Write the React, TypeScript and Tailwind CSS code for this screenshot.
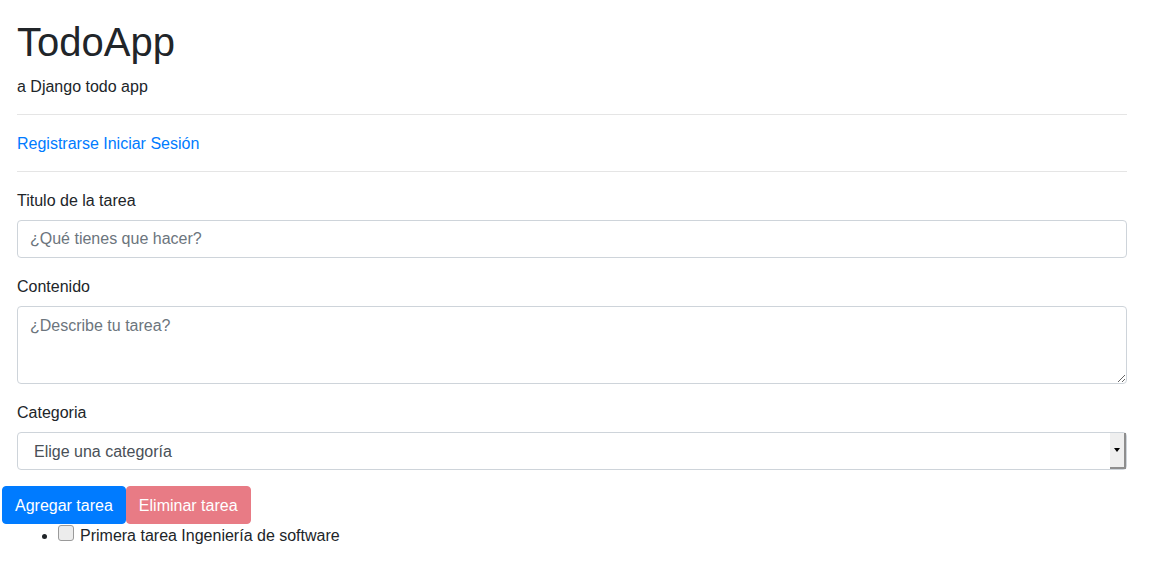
import { useState } from "react";

const font = "font-['Liberation_Sans',Arial,sans-serif]";

export default function App() {
  const [done, setDone] = useState(false);

  return (
    <div className={`min-h-screen bg-white pt-[18px] text-[16px] leading-6 text-[#212529] ${font}`}>
      <div className="ml-[17px] w-[1110px]">
        <h1 className="mb-2 text-[40px] font-medium leading-[48px]">TodoApp</h1>
        <p className="mb-4 h-6 pt-px">a Django todo app</p>
        <hr className="my-4 border-t border-black/10" />
        <div className="h-6 pt-px">
          <a href="#" className="text-[#007bff] hover:underline">
            Registrarse
          </a>{" "}
          <a href="#" className="text-[#007bff] hover:underline">
            Iniciar Sesión
          </a>
        </div>
        <hr className="my-4 border-t border-black/10" />

        <form onSubmit={(event) => event.preventDefault()}>
          <div className="mb-4">
            <label htmlFor="title" className="mb-2 block h-6 pt-px">
              Titulo de la tarea
            </label>
            <input
              id="title"
              placeholder="¿Qué tienes que hacer?"
              className="block h-[38px] w-full rounded border border-[#ced4da] px-3 py-1.5 text-[#495057] outline-none placeholder:text-[#6c757d]"
            />
          </div>

          <div className="mb-4">
            <label htmlFor="content" className="mb-2 block h-6 pt-px">
              Contenido
            </label>
            <textarea
              id="content"
              placeholder="¿Describe tu tarea?"
              className="block h-[78px] w-full rounded border border-[#ced4da] px-3 pb-1.5 pt-[7px] text-[#495057] outline-none placeholder:text-[#6c757d]"
            />
          </div>

          <div className="mb-4">
            <label className="mb-2 block h-6 pt-px">Categoria</label>
            <div className="flex h-[38px] w-full items-stretch rounded border border-[#ced4da] text-[#495057]">
              <span className="flex flex-1 items-center pl-4 pt-px">Elige una categoría</span>
              <span className="flex w-4 items-center justify-center border-b-2 border-r-2 border-[#8e8e8e] bg-[#efefef]">
                <span className="h-0 w-0 border-x-[3.5px] border-t-[4px] border-x-transparent border-t-black" />
              </span>
            </div>
          </div>
        </form>
      </div>

      <div className="ml-[2px] flex">
        <button
          type="button"
          className="h-[38px] rounded border border-[#007bff] bg-[#007bff] px-3 pt-px text-white"
        >
          Agregar tarea
        </button>
        <button
          type="button"
          disabled
          className="h-[38px] rounded border border-[#dc3545] bg-[#dc3545] px-3 pt-px text-white opacity-65"
        >
          Eliminar tarea
        </button>
      </div>

      <ul className="list-none pl-[42px]">
        <li className="h-6">
          <span className="mr-[11px] inline-block h-[5px] w-[5px] rounded-full bg-[#212529] align-middle" />
          <label>
            <input
              type="checkbox"
              checked={done}
              onChange={(event) => setDone(event.target.checked)}
              className="mr-1.5 mt-px inline-block h-4 w-4 appearance-none rounded-[3px] border border-[#9a9a9a] bg-[#ececec] align-top checked:bg-[#007bff]"
            />
            Primera tarea Ingeniería de software
          </label>
        </li>
      </ul>
    </div>
  );
}
